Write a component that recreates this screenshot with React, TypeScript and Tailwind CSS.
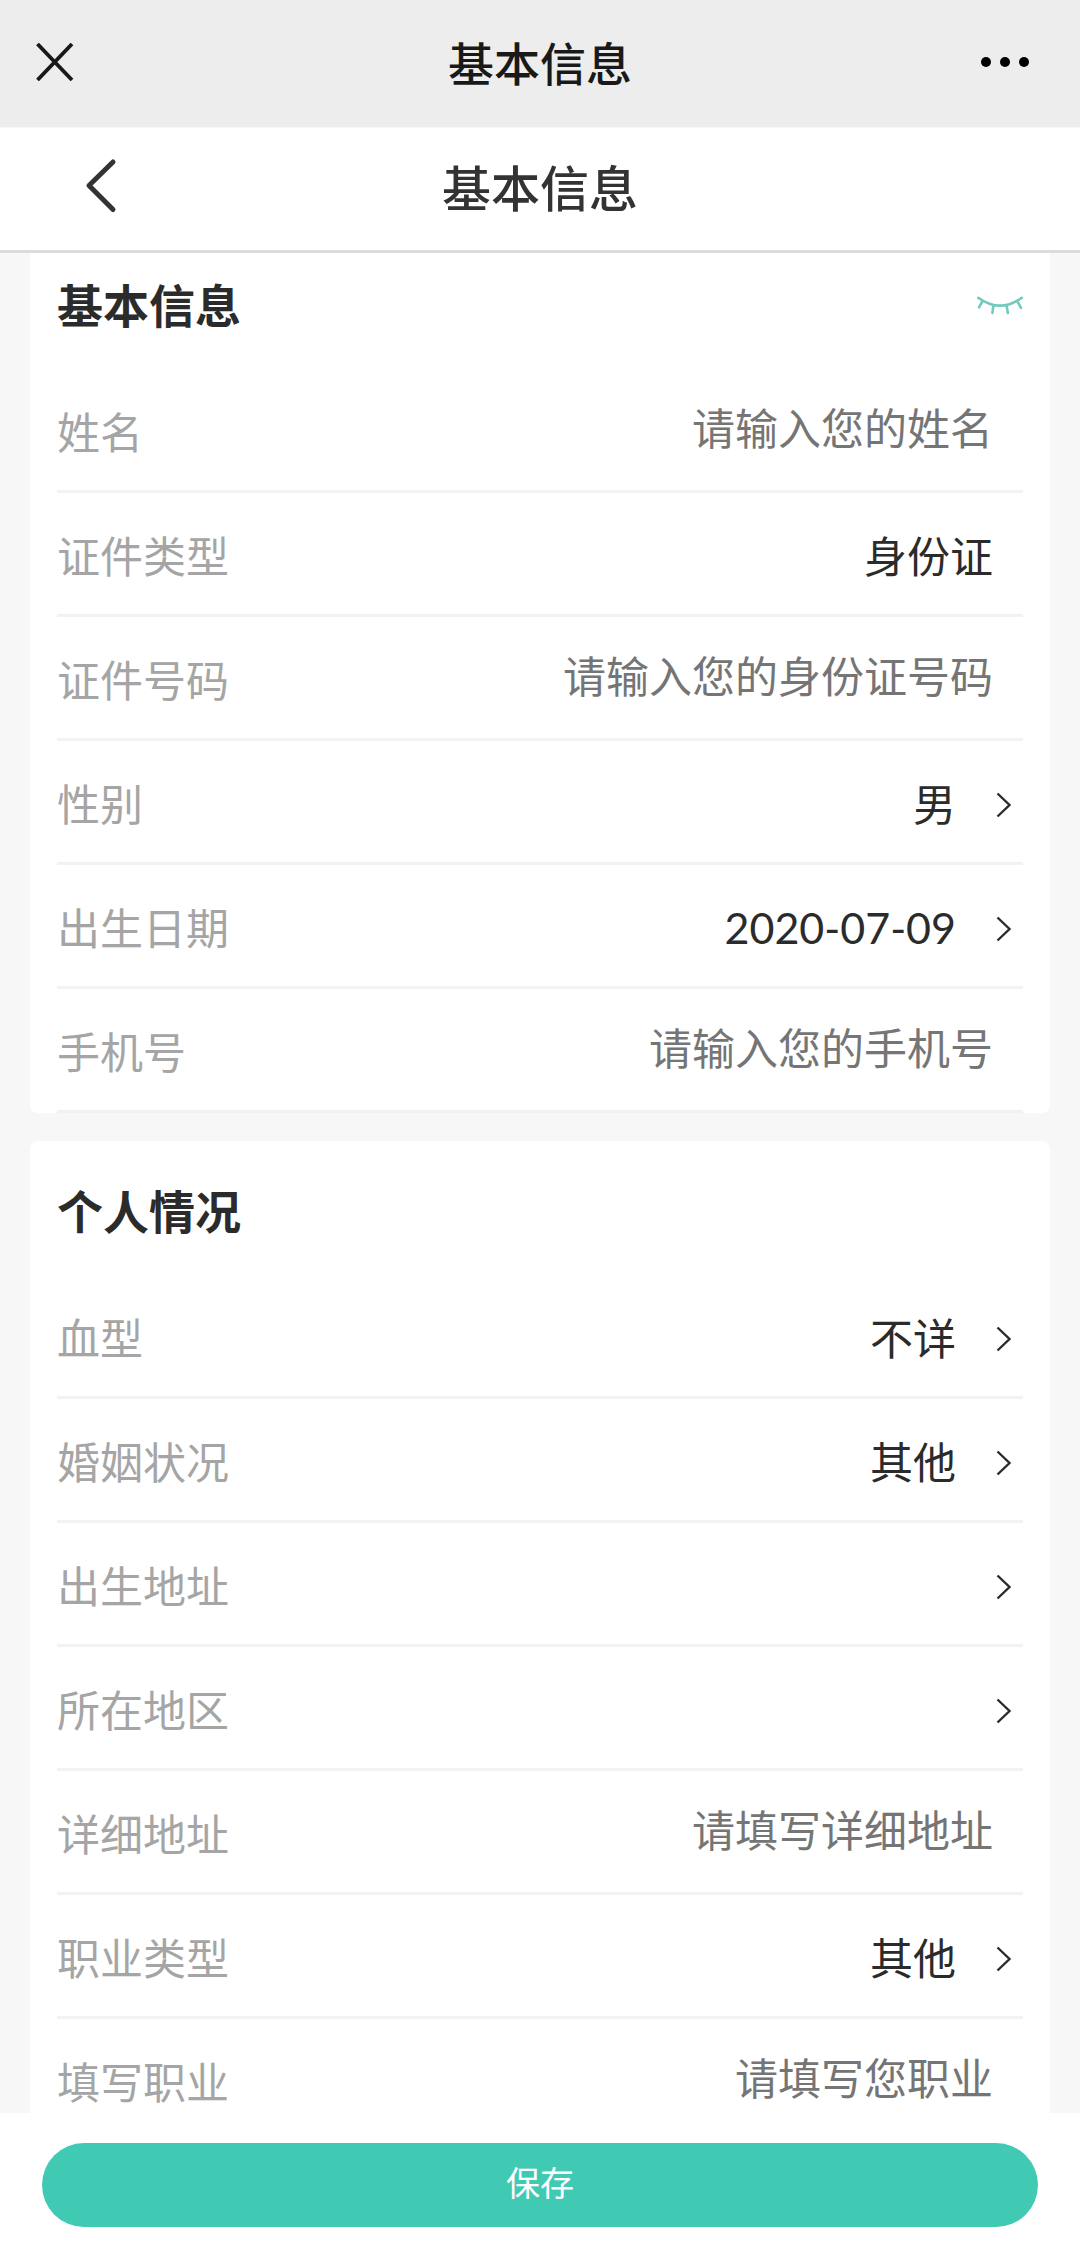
import { ReactNode, useState } from 'react';
import clsx from 'clsx';

type FieldKind = 'input' | 'readonly' | 'select' | 'picker';

interface Field {
  id: string;
  label: string;
  kind: FieldKind;
  value?: string;
  placeholder?: string;
  options?: string[];
}

const BASIC_FIELDS: Field[] = [
  { id: 'name', label: '姓名', kind: 'input', placeholder: '请输入您的姓名' },
  { id: 'idType', label: '证件类型', kind: 'readonly', value: '身份证' },
  { id: 'idNumber', label: '证件号码', kind: 'input', placeholder: '请输入您的身份证号码' },
  { id: 'gender', label: '性别', kind: 'select', value: '男', options: ['男', '女'] },
  { id: 'birthday', label: '出生日期', kind: 'picker', value: '2020-07-09' },
  { id: 'phone', label: '手机号', kind: 'input', placeholder: '请输入您的手机号' },
];

const PERSONAL_FIELDS: Field[] = [
  { id: 'blood', label: '血型', kind: 'select', value: '不详', options: ['不详', 'A', 'B', 'O', 'AB'] },
  { id: 'marriage', label: '婚姻状况', kind: 'select', value: '其他', options: ['其他', '未婚', '已婚'] },
  { id: 'birthplace', label: '出生地址', kind: 'picker' },
  { id: 'region', label: '所在地区', kind: 'picker' },
  { id: 'address', label: '详细地址', kind: 'input', placeholder: '请填写详细地址' },
  { id: 'jobType', label: '职业类型', kind: 'select', value: '其他', options: ['其他', '职员', '学生'] },
  { id: 'job', label: '填写职业', kind: 'input', placeholder: '请填写您职业' },
];

function Chevron() {
  return (
    <svg
      className="w-4 h-7 mt-1.5 shrink-0 pointer-events-none"
      viewBox="0 0 16 28"
      fill="none"
      stroke="#2b2b2b"
      strokeWidth="2.4"
      aria-hidden="true"
    >
      <path d="M1.5 2.5 13.5 14 1.5 25.5" />
    </svg>
  );
}

function FieldRow({ field }: { field: Field }) {
  const { id, label, kind, value, placeholder, options } = field;
  const hasArrow = kind === 'select' || kind === 'picker';

  return (
    <div
      className={clsx(
        'flex items-center h-[124px] border-b-[3px] border-[#f2f2f2] text-[43px] leading-[60px]',
        hasArrow ? 'pr-[11px]' : 'pr-[30px]',
      )}
    >
      <label htmlFor={id} className="shrink-0 text-[#a5a5a5]">
        {label}
      </label>

      {kind === 'input' && (
        <input
          id={id}
          type="text"
          placeholder={placeholder}
          className="flex-1 min-w-0 pb-2 bg-transparent text-right text-[#2b2b2b] placeholder:text-[#757575] outline-none"
        />
      )}

      {kind === 'readonly' && (
        <input
          id={id}
          type="text"
          value={value}
          readOnly
          className="flex-1 min-w-0 bg-transparent text-right text-[#2b2b2b] outline-none"
        />
      )}

      {kind === 'select' && (
        <div className="flex flex-1 items-center justify-end gap-10">
          <select
            id={id}
            defaultValue={value}
            className="appearance-none field-sizing-content bg-transparent text-[#2b2b2b] outline-none"
          >
            {options?.map((o) => (
              <option key={o}>{o}</option>
            ))}
          </select>
          <Chevron />
        </div>
      )}

      {kind === 'picker' && (
        <button
          id={id}
          type="button"
          className="flex flex-1 items-center justify-end gap-10 text-[#2b2b2b] font-['Lato','Noto_Sans_CJK_SC',sans-serif]"
        >
          {value && <span className="pt-1">{value}</span>}
          <Chevron />
        </button>
      )}
    </div>
  );
}

function Section({ title, fields, action }: { title: string; fields: Field[]; action?: ReactNode }) {
  return (
    <section className="rounded-lg bg-white px-[27px]">
      <div className="flex items-center justify-between h-[134px] pt-0.5">
        <h2 className="text-[46px] leading-[60px] font-bold text-[#2b2b2b]">{title}</h2>
        {action}
      </div>
      {fields.map((f) => (
        <FieldRow key={f.id} field={f} />
      ))}
    </section>
  );
}

export default function App() {
  const [hidden, setHidden] = useState(true);

  return (
    <div className="flex flex-col h-screen bg-[#f7f7f7] font-['Noto_Sans_CJK_SC',sans-serif]">
      {/* Webview bar */}
      <header className="grid grid-cols-[1fr_auto_1fr] items-center h-32 shrink-0 px-9 pb-1 border-b border-[#f7f7f7] bg-[#ededed]">
        <button type="button" aria-label="关闭" className="justify-self-start">
          <svg className="w-[38px] h-[38px]" viewBox="0 0 38 38" fill="none" stroke="#191919" strokeWidth="3.8">
            <path d="M1.5 1 36 37M36 1 1.5 37" />
          </svg>
        </button>
        <div className="pb-0.5 text-[46px] leading-[60px] font-medium text-[#191919]">基本信息</div>
        <button type="button" aria-label="更多" className="justify-self-end pr-[15px]">
          <svg className="w-12 h-3" viewBox="0 0 48 12" fill="#000">
            <circle cx="5" cy="6" r="5" />
            <circle cx="24" cy="6" r="5" />
            <circle cx="43" cy="6" r="5" />
          </svg>
        </button>
      </header>

      {/* Page bar */}
      <nav className="grid grid-cols-[1fr_auto_1fr] items-center h-[125px] shrink-0 px-[85px] pb-1.5 border-b-[3px] border-[#dcdcdc] bg-white">
        <button type="button" aria-label="返回" className="justify-self-start">
          <svg
            className="w-8 h-14"
            viewBox="0 0 32 56"
            fill="none"
            stroke="#333"
            strokeWidth="5"
            strokeLinecap="round"
            strokeLinejoin="round"
          >
            <path d="M28 4 4 27.5 28 51.5" />
          </svg>
        </button>
        <h1 className="text-[49px] leading-[60px] font-medium text-[#333]">基本信息</h1>
      </nav>

      {/* Form */}
      <main className="flex-1 min-h-0 overflow-y-auto px-[30px] [scrollbar-width:none]">
        <div className="flex flex-col gap-7 -mt-[18px]">
          <Section
            title="基本信息"
            fields={BASIC_FIELDS}
            action={
              <button
                type="button"
                aria-label="显示或隐藏"
                aria-pressed={hidden}
                onClick={() => setHidden(!hidden)}
                className="pt-1.5"
              >
                <svg
                  className="w-[46px] h-5"
                  viewBox="0 0 46 20"
                  fill="none"
                  stroke="#73c9be"
                  strokeWidth="2.6"
                  strokeLinecap="round"
                >
                  <path d="M1.2 1.8Q23 17.6 44.8 1.8M5.4 5.4 2 11.4M16.4 9.4 15.4 17M29.6 9.4 30.8 17M40.4 5.4 44 11.8" />
                </svg>
              </button>
            }
          />
          <Section title="个人情况" fields={PERSONAL_FIELDS} />
        </div>
      </main>

      {/* Save */}
      <footer className="shrink-0 px-[42px] pt-[30px] pb-[29px] bg-white">
        <button
          type="button"
          className="block w-full h-[84px] pb-1.5 rounded-full bg-[#40c9b3] text-[34px] leading-[44px] text-white"
        >
          保存
        </button>
      </footer>
    </div>
  );
}
